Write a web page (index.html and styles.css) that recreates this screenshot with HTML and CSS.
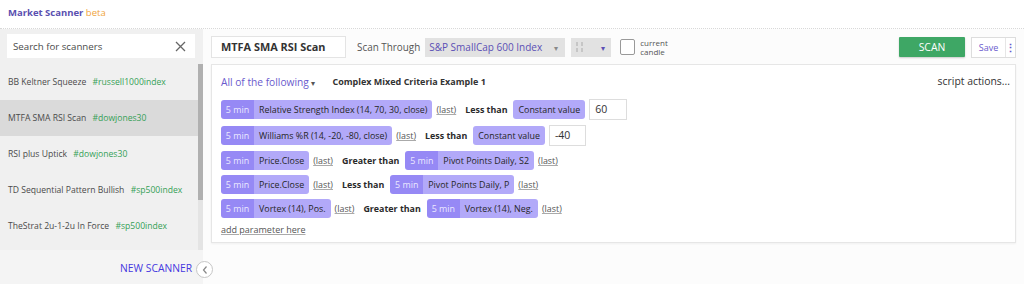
FILE: index.html
```html
<!DOCTYPE html>
<html>
<head>
<meta charset="utf-8">
<link rel="stylesheet" href="styles.css">
</head>
<body>
<header class="top">
  <span class="brand">Market Scanner</span> <span class="beta">beta</span>
</header>
<div class="body">
  <aside class="side">
    <div class="search-wrap">
      <div class="search">
        <span class="ph">Search for scanners</span>
        <svg class="x" width="11" height="11" viewBox="0 0 11 11"><path d="M1 1L10 10M10 1L1 10" stroke="#666" stroke-width="1.3"/></svg>
      </div>
    </div>
    <div class="list-wrap">
      <ul class="list">
        <li>BB Keltner Squeeze <span class="tag">#russell1000index</span></li>
        <li class="sel">MTFA SMA RSI Scan <span class="tag">#dowjones30</span></li>
        <li>RSI plus Uptick <span class="tag">#dowjones30</span></li>
        <li>TD Sequential Pattern Bullish <span class="tag">#sp500index</span></li>
        <li>TheStrat 2u-1-2u In Force <span class="tag">#sp500index</span></li>
      </ul>
      <div class="scrollbar"><div class="thumb"></div></div>
    </div>
    <div class="side-foot"><span class="new">NEW SCANNER</span></div>
    <div class="collapse"><svg width="8" height="10" viewBox="0 0 8 10"><path d="M5.5 1.5L2.5 5L5.5 8.5" fill="none" stroke="#888" stroke-width="1.2"/></svg></div>
  </aside>
  <main class="main">
    <div class="toolbar">
      <div class="name">MTFA SMA RSI Scan</div>
      <span class="through">Scan Through</span>
      <div class="dd dd-index"><span>S&amp;P SmallCap 600 Index</span><span class="caret">▾</span></div>
      <div class="dd dd-tf"><svg width="10" height="12" viewBox="0 0 10 12"><path d="M2 1V5M2 7V11M7 1V5M7 7V11" stroke="#b0b0b0" stroke-width="1.1"/></svg><span class="caret">▾</span></div>
      <div class="cb"></div>
      <div class="cb-label">current<br>candle</div>
      <div class="spacer"></div>
      <button class="scan">SCAN</button>
      <div class="save"><span class="save-t">Save</span><span class="kebab">⋮</span></div>
    </div>
    <section class="panel">
      <div class="phead">
        <span class="allof">All of the following <span class="caret2">▾</span></span>
        <span class="ptitle">Complex Mixed Criteria Example 1</span>
        <span class="actions">script actions...</span>
      </div>
      <div class="row tall">
        <span class="chip"><span class="tf">5 min</span><span class="lbl">Relative Strength Index (14, 70, 30, close)</span></span>
        <span class="last">(last)</span>
        <span class="op">Less than</span>
        <span class="chip"><span class="lbl">Constant value</span></span>
        <span class="val" style="width:38px">60</span>
      </div>
      <div class="row tall">
        <span class="chip"><span class="tf">5 min</span><span class="lbl">Williams %R (14, -20, -80, close)</span></span>
        <span class="last">(last)</span>
        <span class="op">Less than</span>
        <span class="chip"><span class="lbl">Constant value</span></span>
        <span class="val" style="width:37px">-40</span>
      </div>
      <div class="row">
        <span class="chip"><span class="tf">5 min</span><span class="lbl">Price.Close</span></span>
        <span class="last">(last)</span>
        <span class="op">Greater than</span>
        <span class="chip"><span class="tf">5 min</span><span class="lbl">Pivot Points Daily, S2</span></span>
        <span class="last">(last)</span>
      </div>
      <div class="row">
        <span class="chip"><span class="tf">5 min</span><span class="lbl">Price.Close</span></span>
        <span class="last">(last)</span>
        <span class="op">Less than</span>
        <span class="chip"><span class="tf">5 min</span><span class="lbl">Pivot Points Daily, P</span></span>
        <span class="last">(last)</span>
      </div>
      <div class="row">
        <span class="chip"><span class="tf">5 min</span><span class="lbl">Vortex (14), Pos.</span></span>
        <span class="last">(last)</span>
        <span class="op">Greater than</span>
        <span class="chip"><span class="tf">5 min</span><span class="lbl">Vortex (14), Neg.</span></span>
        <span class="last">(last)</span>
      </div>
      <div class="addp">add parameter here</div>
    </section>
  </main>
</div>
</body>
</html>
```
FILE: styles.css
```css
* { box-sizing: border-box; }
html, body { margin: 0; padding: 0; }
body {
  width: 1024px;
  height: 284px;
  overflow: hidden;
  font-family: "Open Sans", "Liberation Sans", sans-serif;
  color: #333;
  background: #fcfcfc;
}
.top {
  height: 29px;
  padding: 6px 8px 0;
  background: #fff;
  border-bottom: 1px dotted #d8d8d8;
  font-size: 9.5px;
  line-height: 14px;
}
.brand { font-weight: 700; color: #5a4fb0; }
.beta { color: #f0a43c; }
.body { display: flex; height: 255px; }
.side {
  position: relative;
  width: 203px;
  flex: none;
  background: #f0f0f0;
  display: flex;
  flex-direction: column;
}
.search-wrap { height: 35px; padding: 5px 8px 0 7px; }
.search {
  height: 24px;
  background: #fff;
  display: flex;
  align-items: center;
  padding: 0 9px 0 6px;
  font-size: 9.7px;
  color: #4a4a4a;
}
.ph { flex: 1; }
.list-wrap { display: flex; height: 186px; }
.list { list-style: none; margin: 0; padding: 0; flex: 1; }
.list li {
  height: 36px;
  line-height: 36px;
  padding-left: 8px;
  font-size: 8.6px;
  color: #4a4a4a;
  white-space: nowrap;
}
.list li.sel { background: #dadada; }
.tag { color: #35a056; margin-left: 4px; }
.scrollbar { width: 5px; background: #e4e4e4; }
.thumb { height: 136px; background: #b0b0b0; }
.side-foot {
  flex: 1;
  background: #f4f4f4;
  display: flex;
  align-items: center;
  justify-content: flex-end;
  padding-right: 11px;
}
.new { color: #4538e0; font-size: 10.3px; padding-top: 2px; }
.collapse {
  position: absolute;
  left: 196px;
  top: 232px;
  width: 17px;
  height: 17px;
  border-radius: 50%;
  background: #fff;
  border: 1px solid #c6c6c6;
  display: flex;
  align-items: center;
  justify-content: center;
}
.main { flex: 1; padding: 0 8px; }
.toolbar {
  height: 35px;
  display: flex;
  align-items: center;
  padding-top: 1px;
}
.name {
  width: 135px;
  height: 22px;
  border: 1px solid #e4e4e4;
  background: #fff;
  font-weight: 700;
  font-size: 10.9px;
  line-height: 20px;
  padding-left: 9px;
  color: #333;
}
.through { font-size: 9.9px; color: #555; margin-left: 11px; }
.dd {
  height: 19px;
  background: #e2e2e2;
  display: flex;
  align-items: center;
  font-size: 10px;
  color: #5b4fb5;
}
.dd-index { width: 140px; margin-left: 5px; padding-left: 4px; justify-content: space-between; padding-right: 7px; }
.dd-tf { width: 40px; margin-left: 6px; padding: 0 6px 0 4px; justify-content: space-between; }
.caret { font-size: 8px; color: #5b4fb5; }
.dd-index .caret { color: #888; }
.cb {
  width: 15px;
  height: 16px;
  border: 1px solid #999;
  border-radius: 2px;
  background: #fff;
  margin-left: 9px;
}
.cb-label { font-size: 8px; line-height: 9px; color: #555; margin-left: 5px; }
.spacer { flex: 1; }
.scan {
  width: 66px;
  height: 20px;
  border: none;
  border-radius: 1px;
  background: #3ea765;
  color: #fff;
  font-family: inherit;
  font-size: 10.4px;
  padding: 0;
  box-shadow: 0 1px 2px rgba(0,0,0,0.2);
}
.save {
  margin-left: 6px;
  height: 21px;
  display: flex;
  align-items: stretch;
  border: 1px solid #ddd;
  background: #fff;
  color: #6a5acd;
  font-size: 9px;
}
.save-t { width: 33px; display: flex; align-items: center; justify-content: center; }
.kebab { width: 10px; border-left: 1px solid #e6e6e6; display: flex; align-items: center; justify-content: center; font-size: 11px; font-weight: 700; }
.panel {
  height: 179px;
  background: #fff;
  border: 1px solid #e6e6e6;
  box-shadow: 0 1px 2px rgba(0,0,0,0.05);
  padding: 9px 5px 0 9px;
}
.phead { display: flex; align-items: flex-start; height: 25px; line-height: 16px; }
.allof { color: #6a5acd; font-size: 10.2px; }
.caret2 { font-size: 8px; color: #555; }
.ptitle { font-weight: 700; margin-left: 17px; font-size: 9px; }
.actions { margin-left: auto; font-size: 10.4px; line-height: 12px; padding-top: 1px; }
.row {
  display: flex;
  align-items: center;
  height: 19px;
  margin-bottom: 5px;
  font-size: 8.9px;
  white-space: nowrap;
}
.row.tall { height: 21px; }
.chip { display: flex; height: 19px; border-radius: 3px; overflow: hidden; }
.chip .tf { background: #9689f5; color: #ebe8ff; width: 33px; text-align: center; line-height: 19px; }
.chip .lbl { background: #b2a9f9; color: #262626; padding: 0 5px; line-height: 19px; }
.last { color: #555; text-decoration: underline; text-decoration-color: #aaa; margin: 0 9px 0 4px; }
.op { font-weight: 700; margin-right: 6px; color: #2a2a2a; }
.val {
  height: 21px;
  border: 1px solid #ddd;
  background: #fff;
  margin-left: 4px;
  padding-left: 5px;
  font-size: 10.5px;
  line-height: 19px;
}
.addp { font-size: 9px; color: #555; text-decoration: underline; text-decoration-color: #aaa; margin-top: 4px; }
```
